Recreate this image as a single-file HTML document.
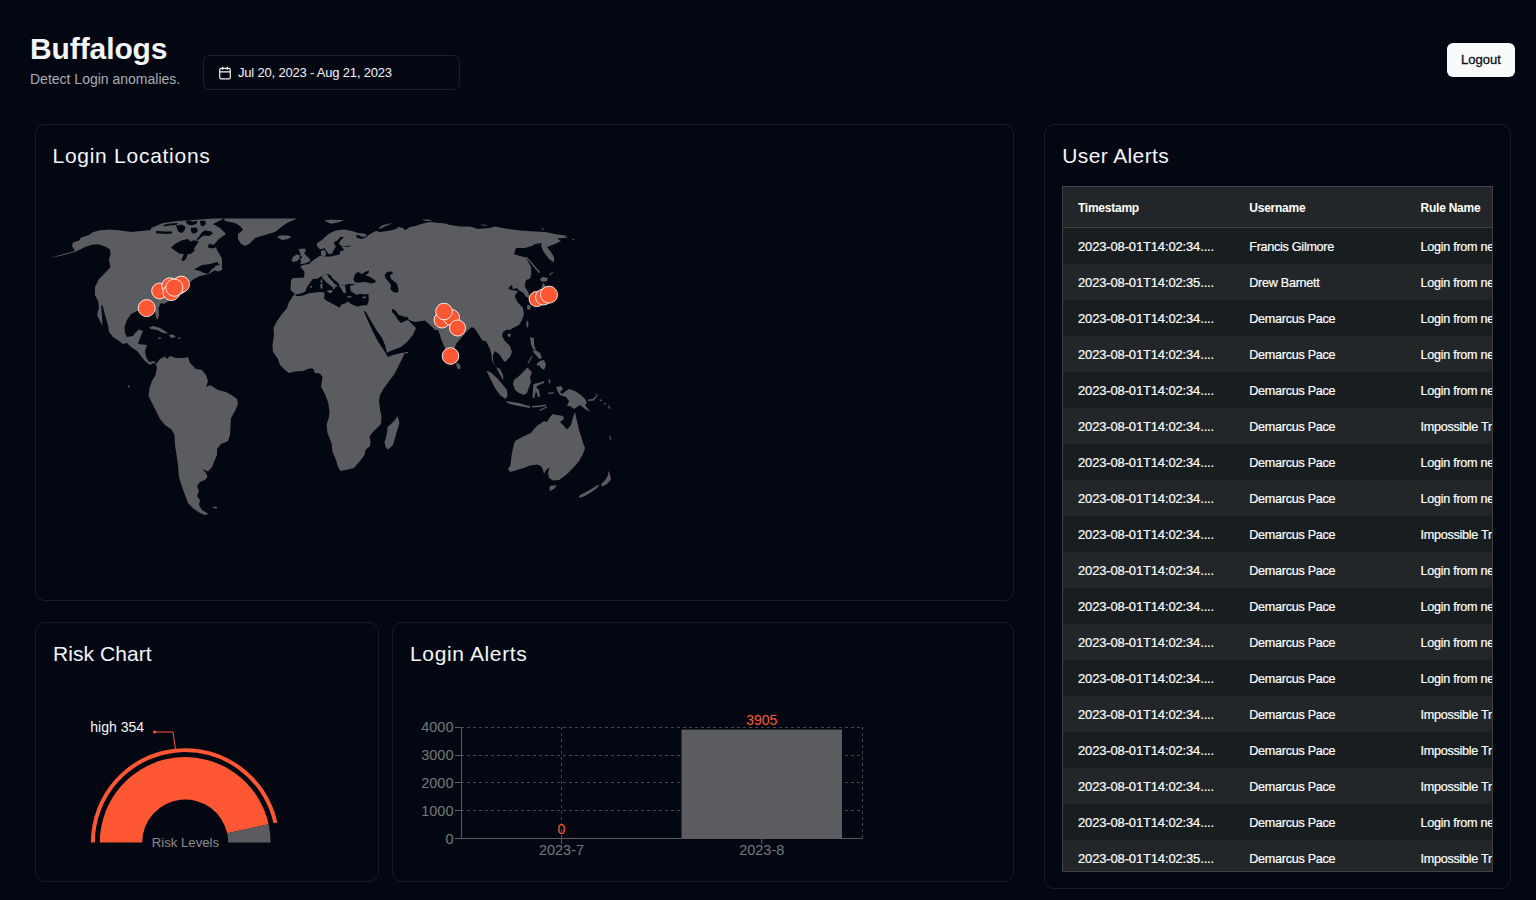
<!DOCTYPE html>
<html lang="en">
<head>
<meta charset="utf-8">
<title>Buffalogs</title>
<style>
*{box-sizing:border-box;margin:0;padding:0}
html,body{width:1536px;height:900px;overflow:hidden;background:#030712;color:#f4f5f7;font-family:"Liberation Sans",sans-serif}
.abs{position:absolute}
h1{position:absolute;left:30px;top:30px;font-size:30px;line-height:38px;font-weight:700;color:#f4f5f7;letter-spacing:-0.1px}
.sub{position:absolute;left:30px;top:70px;font-size:14px;line-height:18px;color:#a9acb3}
.date{position:absolute;left:203px;top:55px;width:257px;height:35px;border:1px solid #1b1f27;border-radius:6px}
.date svg{position:absolute;left:14px;top:10px}
.date span{position:absolute;left:34px;top:9px;font-size:13px;line-height:16px;color:#f4f5f7;white-space:nowrap;letter-spacing:-0.19px}
.logout{position:absolute;left:1447px;top:43px;width:68px;height:34px;border-radius:6px;background:#f8fafc;color:#0b0f19;font-size:13px;line-height:34px;text-align:center;font-weight:500;-webkit-text-stroke:0.3px #0b0f19}
.card{position:absolute;border:1px solid #191d23;border-radius:10px}
.card h2{position:absolute;left:16px;top:17px;font-size:21px;line-height:28px;font-weight:400;color:#f4f5f7;white-space:nowrap;letter-spacing:0.2px}
.grid{position:absolute;left:1062px;top:186px;width:431px;height:686px;border:1px solid #3f4146;background:#181d1f;overflow:hidden;font-size:13px;color:#fff}
.hdr{height:41px;background:#222628;border-bottom:1px solid #3f4146;display:flex;font-weight:700;font-size:12px;letter-spacing:-0.25px}
.hdr div{width:171.3px;flex:none;padding-left:15px;line-height:42px;white-space:nowrap}
.row{height:36px;display:flex}
.row.even{background:#181d1f}
.row.odd{background:#222628}
.cell{width:171.3px;flex:none;padding-left:15px;line-height:38px;height:36px;white-space:nowrap;overflow:hidden;letter-spacing:-0.28px;font-size:12.6px;-webkit-text-stroke:0.2px #fff}
.cell:first-child{letter-spacing:-0.15px;font-size:13px}
</style>
</head>
<body>
<h1>Buffalogs</h1>
<div class="sub">Detect Login anomalies.</div>
<div class="date">
<svg width="14" height="14" viewBox="0 0 24 24" fill="none" stroke="#f4f5f7" stroke-width="2" stroke-linecap="round" stroke-linejoin="round"><rect x="3" y="4" width="18" height="18" rx="2"/><path d="M16 2v4M8 2v4M3 10h18"/></svg>
<span>Jul 20, 2023 - Aug 21, 2023</span>
</div>
<div class="logout">Logout</div>

<div class="card" style="left:35px;top:124px;width:979px;height:477px"><h2 style="left:16.5px;letter-spacing:0.73px">Login Locations</h2></div>
<svg class="abs" style="left:35px;top:124px" width="979" height="477" viewBox="35 124 979 477">
<path fill="#5b5c60" d="M51,257.5 60,255 75,251 72,246 73,242.5 79,240.5 81,237.5 89,235 92,232.5 99,230.5 109,229.5 121,230.5 131,232 141,231 151,230 151,228 163,223 178,221 200,219.5 213,218.5 224,218.5 213,224 220,228 226,234 220,238 217,241 215,245 217,250 220,255 222,259 222,265 221,271 215,270 209,274 200,276 194,279 189,283 186,289 178,298 170,300 164,304 161,303 158.5,308 159,315 157.5,320 156,317 155,311 148,311 137,311 131,314 127,320 124.5,327 125,333 127,337 133,336 135,333 139,329.5 143,331 140,338 138,344 147,345 145,351 146,357 149,362 154,361 156,364 153,363 150,365 145,361 141,356 137,351 131,347 127,343 123,344 119,341 113,337 109,332 108,325 105,315 102.5,305 101,306 102,315 102.5,326 100,321 97,315 99,308 98,301 95,295 95,287 99,279 105,273 110.5,267 109.5,263 109,259 110.5,255 110,249.5 105,246.5 99,244.5 93,244.5 85,247 75,252 60,256Z M224,218.5 297,218.5 287,223 280,228 275,232 265,235 255,238 249,244 245,246 241,244 238,239 238,234 243,230 240,226 235,223 225,221Z M156,364 160,359 165,356.5 167,359 170,356 176,358 184,358 188,357 190,363 196,369 202,370 206,375 208,381 206,387 210,385 218,390 226,392 233,396 237,399 238,404 235,411 231,418 230.5,427 230,435 228,441 221,444 217,449 217,455 214,462 212,467 208,471.5 202.5,469 206,473 207.5,477 205,480 200,482 197,486 199,491 197,496 200,500 199,505 202,510 208.5,514 205,515 200,513 194,509 188,503 185,495 182,487 179,477 178,465 176.5,455 175,445 174.5,435 172,430 165,425 160,419 156,411 152,403 148.5,396 149.5,388 152,381 155.5,375 157,368Z M295,294 290.5,290 291,280 293,278 304,277.5 304.5,272 301.5,268 300,267 303,265 309,264 312,261 318,257 321,255 323,252 322,249 320,249.5 317,246 317,243 322,240 325,237 330,233 336,230.5 344,229.5 352,231 358,233 364,233.5 367,235 365,237 359,236 360,239 365,238 370,234 376,231 380,232 388,231 396,229 398,227 403,228 405,230 408,235 406,235 404,231 410,227 415,226 421,224 430,222 435,222.5 445,223.5 450,225 460,226.5 470,226.5 478,229 489,228 495,226.5 505,228.5 520,230.5 535,231.5 545,232 555,234 565,235.5 568,237.5 557,238.5 561,241 555,244 547,247 551,252 554,257 554,262.5 549,259 543,251 541,245 542,243 535,244 532,246 525,248 516,248 514,254 520,256 526,257.5 531,267 531.3,274 530,278.7 526,280 524.7,286 528.7,293.3 529.3,298 526,296.7 523.3,292.7 519,290.5 516.7,288 512.7,289.3 512,284.7 508,288.3 511,290 518,291 514.7,296 516.7,300.7 520,304.7 523,308 524,314 522,320 519,325 513,328 510,330 507,329.5 503,332 502,336 505,341 510,346 512,352 510,357 505,362 503,360 500,355 495,351 493,355 493,361 496,367 500,369 503,375 503.5,380.5 502,378 499,373 496,367 492,361 491.5,355 490,349 486,341 483,341 480,337 479,335 475,329 472,327 468,330 462,337 456,344 455,347 453,362 449,356 444,346 441,339 440,335 438,330 435,330 431,326 425,320.5 415,322 409,320 407,316.5 405,317 399,315 395,310 392,309 392,312 395,315 398,320 401,323 405,321 408,320 411,323 416,328 413,335 407,342 401,347 393,350 386.5,353 388,357 393,355 401,353 405,352.5 403,357 399,365 395,373 390,380 384,388 380,395 379,401 380,409 381.5,417 381,424 376,429 371,434 369.5,437 370.5,441 370,446 365.5,450 364.5,455 360,461 354,468 348,469.5 340.5,471 338,467 336,460 332.5,452 331.5,443 327.5,433 326.5,425 329,417 329.5,411 328,402 325,394 321,387 322.5,377 320,373.5 315,373 313,368.5 309,368.5 303,371 295,371.5 289,373 285,370 280,365 278,359 273,352 272.5,345 274,335 273.5,328 277,321 282,314 287,308 289,302 293,296Z M538,425 534,429 531,433 524,436 515,441 513,448 511.5,456 510.5,465 508,469 510,472 517,470 524,468 530,465.5 537,464.5 541,466 543,470 544,474 546,470 549.5,467.5 548,473 549,478 553,480.5 559,480 566,475 573,468 579,461 583,454 585,448 583,443 581,436 579,430 578,425 576.5,419 575,412 573,417 571,425 567,429.5 564,426 560,422 564,419 563,416 557,415 553,414 550,417 547,422 544,421 540,424Z"/>
<path fill="#030712" d="M295.5,294.7 297,294.3 302.4,293.1 305.4,291.4 306.6,287.8 309,284.2 312,280 313.2,278.7 317.4,278.7 321,276.4 324,275.5 327.6,274 330.6,275.2 333,278.8 337.8,282.4 339,284.8 345,285.1 348,284.1 354.6,284.1 354,285.1 349.8,285.7 351,291.4 354,293.2 357,295 360,293.8 365.4,294.4 368.4,293.8 368.7,301 367.2,305.2 363,305.3 357,306.5 351,304 348,301.6 345,303.4 341.4,304.6 339.6,307.7 336,305.8 333,304 327,301 324,298.6 324.6,293.8 324,292.3 321,292 315,292.6 309,293.3 303,295.6 297,296.3 295.5,295.6Z M353.5,279 355,274 358,272 362,274 365,272 369,270.5 368.5,273.5 365,275 370,277 375,280 376,282 372,283.5 365,282 360,282.5 355,282.5Z M384.5,275 387,272 392,271.5 393,273.5 390,275 391,279 395,282 397,284 398.5,289 398,292.5 394,292.5 390.5,289.5 391,285 388,281 385.5,278Z M363.5,310.5 366,312 371,321 377,331 382,338 385,345 386.5,351 388,357 385,352 379,343 374,334 368,321Z M344.4,237.2 340.2,236.9 337.8,240.2 334.2,242 334.2,244.4 336,246.2 334.8,248.6 333,251 332.4,253.4 329.4,254 328.2,256.4 330.6,256.4 336,255.2 339.6,254.6 340.2,251.6 342.6,250.4 344.1,250.4 343.2,248.6 341.4,247.4 345,246.2 350.4,245.6 350.4,246.5 345,247.1 341.4,246.2 339,243.8 340.2,240.8 342.6,238.4Z M170.9,247.4 176,243.2 182,240.2 188,239 190.4,241.4 194,240.2 198.8,241.4 196.4,245 194,248.6 194.6,250.4 191.6,253.4 187.4,254.6 186.2,258.2 183.8,261.2 181.4,260 183.2,255.8 183.8,254 179,253.4 174.8,250.4Z M194,269.5 202,265 210,264 217,262 220,265 212,269 208,274 204,273 200,271Z M356,235 360,235.5 361,238.5 357,238Z M176,225.5 182,224.6 185.6,227 184.4,230.6 182,233 178.4,231.8 177.2,228.8Z M191,227.9 196.4,227.6 198.2,230.6 195.8,233 192.8,233.6 191,231.2Z M201.8,232.4 204.8,230.6 210.8,231.2 212.9,233.6 209,236 203.6,235.4 199.5,238.5 197.5,240.8 196.5,239.6 199,236.5Z M185.6,222.2 188,220.1 192.8,221.6 197.6,221 196.4,224 191.6,225.2 188,224.6Z M207.8,247.4 209,243.8 213.8,245 216.6,241.5 217.3,246.5 213,248.6Z M156,231 166,231.6 172,231.4 172,233.6 166,234 156,233.3Z M162.8,224.9 170,223.4 178.4,223.1 176,224.9 168.8,225.5 165.2,226.4Z M200,221 205,220.6 206,224 203,226.5 200.5,225Z M317.4,248.9 321,249.5 324.3,248 326.4,251 328.2,253.4 329.4,254 328.2,256.4 324,256.4 320.4,255.5 319,252.5Z"/>
<path fill="#5b5c60" d="M277,237 280,235.5 288,235.5 291.5,237 288,239 282,240Z M324.3,220.4 330.6,219.8 343.8,220.1 339,222.2 331.2,223.7 327,221.9Z M378,228.5 383,225 394,222.8 387,225.5 381,228.5Z M421,219.5 428,219.5 433,221 427,221Z M480,224.5 488,225 484,226Z M298.5,248.9 305.4,248.6 305.4,251 304.2,253.4 307.2,256.4 310.2,259.4 309.6,261.8 304.8,263.6 300,264.2 301.2,261.2 300,259.4 302.4,257 300.6,255.8 300,252.8Z M291.6,260.6 292.8,257 297,254.3 299.7,255.2 299.4,258.8 297,261.2 292.8,262.1Z M323.4,279.1 327,283 330.6,285.4 333,287.8 333,289.6 334.8,288.4 336,286 337.8,286.9 336.6,284.8 334.8,284.2 331.8,280.6 328.8,277.6 327.3,274.3 324.6,275.3 321.5,276.4Z M327,290.5 332.4,289.9 332.4,292 330.6,293.2 327.6,292Z M320.4,284 322.5,284 322.5,288.6 320.4,288.6Z M339,284.8 345,285.4 345.6,289 346.2,292 344.4,293.5 342.6,291.4 341.4,289 339.6,286.6Z M347.4,296 351.6,296.2 351.6,297.6 347.4,297.5Z M362.4,296.8 366,296.6 365.5,298.3 362.6,298.2Z M149,327.5 153,326 160,328 165,331 168,333.5 163,333 157,330 151,329Z M169,335 173,334.5 176,337 171,338Z M178,337.5 180.5,337.5 180.5,338.8 178,338.8Z M158,337.5 161,337.5 161,338.8 158,338.8Z M215,266 221,264.5 222.5,269 218,271.5 214,270Z M456.5,362 460,365 460.5,368.5 458,369.5 456.5,366Z M397.5,416 399.5,423 397,431 393,445 391,447 388,449.5 385.5,447 384.5,442 385.5,439 387,433 387.5,427 391,424 395,420Z M527,320 528.5,323 528,328 526,325Z M507.5,334 510.5,333.5 510.5,336.5 508,337Z M530,337 534,338 534,345 536,350 533,349 531,344Z M533,350 536,350.5 540,353 542,358 539,359 536,355 533.5,352.5Z M540,361 544,360 546,365 544,370 541,368 539,365 537,366 537,363.5Z M527.5,363 531.5,356 532.5,356.5 528.5,363.5Z M527.5,367.5 532,372 530,377 531,382 529,387 527,393 524,395 519,393 515,390 513,384 514,380 518,377 523,372Z M486.5,370.5 491.5,373 498,379 503,385 507,390 507.5,396 505.5,399 500,395 495,388 491,380 488,374Z M506.5,401 512,402 519,403 525,405 530,406 530,408 522,406.5 514,405 507.5,403Z M532,406 540,405.5 546,404.5 546,406 540,407 532,407.5Z M539,410 546.5,406.5 547.5,407.3 540,411Z M533.5,384 540,382.5 544,381 544,383 539,385 536,387 539,390 540,397 538,397 536,391 535,395 534,399 532.5,397 533,389Z M549,378.5 550.5,381 549.5,384.5 548.5,381Z M548,392.5 554,392.5 554,393.8 548,393.8Z M556,387 561,386 563,389 560,392 562,394 566,391 569,389 575,391 581,395 585,399 587,403 585,405 588,409 591,412 585,409 580,405 577,407 574,409 570,406 567,406 569,401 566,397 560,395 558,392Z M588,399.5 593,399 597,395 594.5,392 598,395 594,400.5 588,401Z M600,399 602,400.5 601,401.5 599.5,400Z M604,402.5 606,404 605,405 603.5,403.5Z M608.5,405 610.5,408 609.5,409 608,406Z M550,486 557,485 554,489 549.5,491Z M608.5,470.5 610,475 611,479.5 607,484 602,486.5 601,484.5 606,479 608,475Z M599.5,485 596,489 590,493 584,496.5 578.5,498 580,495 586,492 593,488 598,485Z M609,436 610.2,436 611.5,440 610.5,440Z M213,507 217,506.8 217,508.3 213,508.3Z M525.5,257 527,257 540,272 539,273.3Z M540,279.3 542.7,276.7 548,278 546.7,281.3 543.3,281.8 541,281Z M549,275 552.5,271.5 553.2,272.2 549.8,275.8Z M543,282.5 547,288 546,295 540,300 534,304 530,305 531,301 537,296 541,290Z M527.5,304.5 531,306 530,310 527,309Z M405,352 408,352 408,353.2 405,353.2Z M541,228.5 545,229 543,230Z M572,239 575,239.3 573.5,240.3Z M128,385.5 129.5,385.5 129.5,387.5 128,387.5Z M320.7,279.6 322.2,279.6 322.2,283.2 320.7,283.2Z M310.2,286 312,286 312,287.8 310.2,287.8Z M321,251 323.6,249.8 325.6,251.6 326.2,254.6 324,256.5 321,255Z"/>
<g fill="#ff5733" stroke="#fff" stroke-opacity="0.85" stroke-width="1">
<circle cx="146.7" cy="308.1" r="8.5"/>
<circle cx="159.7" cy="291" r="8"/>
<circle cx="170" cy="286" r="8.2"/>
<circle cx="171.3" cy="292.3" r="8.3"/>
<circle cx="178.5" cy="286" r="8.2"/>
<circle cx="181.3" cy="284.3" r="8.2"/>
<circle cx="174.3" cy="287.7" r="8.6"/>
<circle cx="442" cy="320" r="8"/>
<circle cx="451.5" cy="317.5" r="8"/>
<circle cx="444" cy="311.5" r="8.3"/>
<circle cx="457.5" cy="328" r="8"/>
<circle cx="450.5" cy="356" r="8.3"/>
<circle cx="536.7" cy="299" r="7.6"/>
<circle cx="543.5" cy="297" r="8"/>
<circle cx="549" cy="294.7" r="8.5"/>
</g></svg>
<div class="card" style="left:35px;top:622px;width:344px;height:260px"><h2 style="left:17px;letter-spacing:0.06px">Risk Chart</h2></div>
<div class="card" style="left:392px;top:622px;width:622px;height:260px"><h2 style="left:17px;letter-spacing:0.64px">Login Alerts</h2></div>
<div class="card" style="left:1044px;top:124px;width:467px;height:765px"><h2 style="left:17.2px;letter-spacing:0.39px">User Alerts</h2></div>

<svg class="abs" style="left:35px;top:622px" width="344" height="260" viewBox="35 622 344 260">
  <path d="M99.80 842.50 A85.4 85.4 0 0 1 268.64 824.31 L227.21 833.34 A43 43 0 0 0 142.20 842.50 Z" fill="#ff5733"/>
  <path d="M268.64 824.31 A85.4 85.4 0 0 1 270.60 842.50 L228.20 842.50 A43 43 0 0 0 227.21 833.34 Z" fill="#5b5c60"/>
  <path d="M90.90 842.50 A94.3 94.3 0 0 1 277.34 822.41 L273.52 823.24 A90.4 90.4 0 0 0 94.80 842.50 Z" fill="#ff5733"/>
  <path d="M175.4 749 L173 732 L154.6 732" fill="none" stroke="#ff5733" stroke-width="1"/>
  <circle cx="154.6" cy="732" r="1.6" fill="#ff5733"/>
  <text x="144" y="731.5" text-anchor="end" font-size="14" fill="#f4f5f7" font-family="Liberation Sans, sans-serif">high 354</text>
  <text x="185.4" y="847.3" text-anchor="middle" font-size="13.2" fill="#8b8d92" font-family="Liberation Sans, sans-serif">Risk Levels</text>
</svg>

<svg class="abs" style="left:392px;top:622px" width="622" height="260" viewBox="392 622 622 260" font-family="Liberation Sans, sans-serif">
  <g stroke="#44464c" stroke-width="1" stroke-dasharray="3 3" fill="none">
    <path d="M461 727.5H862.5M461 755.5H862.5M461 782.5H862.5M461 810.5H862.5"/>
    <path d="M561.5 727V838M862.5 727V838"/>
  </g>
  <rect x="681.5" y="729.6" width="160.5" height="108.6" fill="#5b5c60"/>
  <g stroke="#5b5c60" stroke-width="1" fill="none">
    <path d="M461.5 727V838.5M455 838.5H862.5"/>
    <path d="M455 727.5H461M455 755.5H461M455 782.5H461M455 810.5H461"/>
    <path d="M561.5 838.5V844M761.75 838.5V844"/>
  </g>
  <g font-size="14.5" fill="#75777c" text-anchor="end">
    <text x="453.5" y="732">4000</text><text x="453.5" y="760">3000</text><text x="453.5" y="788">2000</text><text x="453.5" y="816">1000</text><text x="453.5" y="844">0</text>
  </g>
  <g font-size="14.5" fill="#75777c" text-anchor="middle">
    <text x="561.5" y="855">2023-7</text><text x="761.75" y="855">2023-8</text>
  </g>
  <g font-size="14" fill="#ff5733" text-anchor="middle">
    <text x="561.5" y="834">0</text><text x="761.75" y="725">3905</text>
  </g>
</svg>

<div class="grid">
<div class="hdr"><div>Timestamp</div><div>Username</div><div>Rule Name</div></div>
<div class="row even"><div class="cell">2023-08-01T14:02:34....</div><div class="cell">Francis Gilmore</div><div class="cell">Login from new country</div></div>
<div class="row odd"><div class="cell">2023-08-01T14:02:35....</div><div class="cell">Drew Barnett</div><div class="cell">Login from new device</div></div>
<div class="row even"><div class="cell">2023-08-01T14:02:34....</div><div class="cell">Demarcus Pace</div><div class="cell">Login from new country</div></div>
<div class="row odd"><div class="cell">2023-08-01T14:02:34....</div><div class="cell">Demarcus Pace</div><div class="cell">Login from new device</div></div>
<div class="row even"><div class="cell">2023-08-01T14:02:34....</div><div class="cell">Demarcus Pace</div><div class="cell">Login from new country</div></div>
<div class="row odd"><div class="cell">2023-08-01T14:02:34....</div><div class="cell">Demarcus Pace</div><div class="cell">Impossible Travel detected</div></div>
<div class="row even"><div class="cell">2023-08-01T14:02:34....</div><div class="cell">Demarcus Pace</div><div class="cell">Login from new country</div></div>
<div class="row odd"><div class="cell">2023-08-01T14:02:34....</div><div class="cell">Demarcus Pace</div><div class="cell">Login from new device</div></div>
<div class="row even"><div class="cell">2023-08-01T14:02:34....</div><div class="cell">Demarcus Pace</div><div class="cell">Impossible Travel detected</div></div>
<div class="row odd"><div class="cell">2023-08-01T14:02:34....</div><div class="cell">Demarcus Pace</div><div class="cell">Login from new country</div></div>
<div class="row even"><div class="cell">2023-08-01T14:02:34....</div><div class="cell">Demarcus Pace</div><div class="cell">Login from new device</div></div>
<div class="row odd"><div class="cell">2023-08-01T14:02:34....</div><div class="cell">Demarcus Pace</div><div class="cell">Login from new country</div></div>
<div class="row even"><div class="cell">2023-08-01T14:02:34....</div><div class="cell">Demarcus Pace</div><div class="cell">Login from new device</div></div>
<div class="row odd"><div class="cell">2023-08-01T14:02:34....</div><div class="cell">Demarcus Pace</div><div class="cell">Impossible Travel detected</div></div>
<div class="row even"><div class="cell">2023-08-01T14:02:34....</div><div class="cell">Demarcus Pace</div><div class="cell">Impossible Travel detected</div></div>
<div class="row odd"><div class="cell">2023-08-01T14:02:34....</div><div class="cell">Demarcus Pace</div><div class="cell">Impossible Travel detected</div></div>
<div class="row even"><div class="cell">2023-08-01T14:02:34....</div><div class="cell">Demarcus Pace</div><div class="cell">Login from new country</div></div>
<div class="row odd"><div class="cell">2023-08-01T14:02:35....</div><div class="cell">Demarcus Pace</div><div class="cell">Impossible Travel detected</div></div>
</div>
</body>
</html>
